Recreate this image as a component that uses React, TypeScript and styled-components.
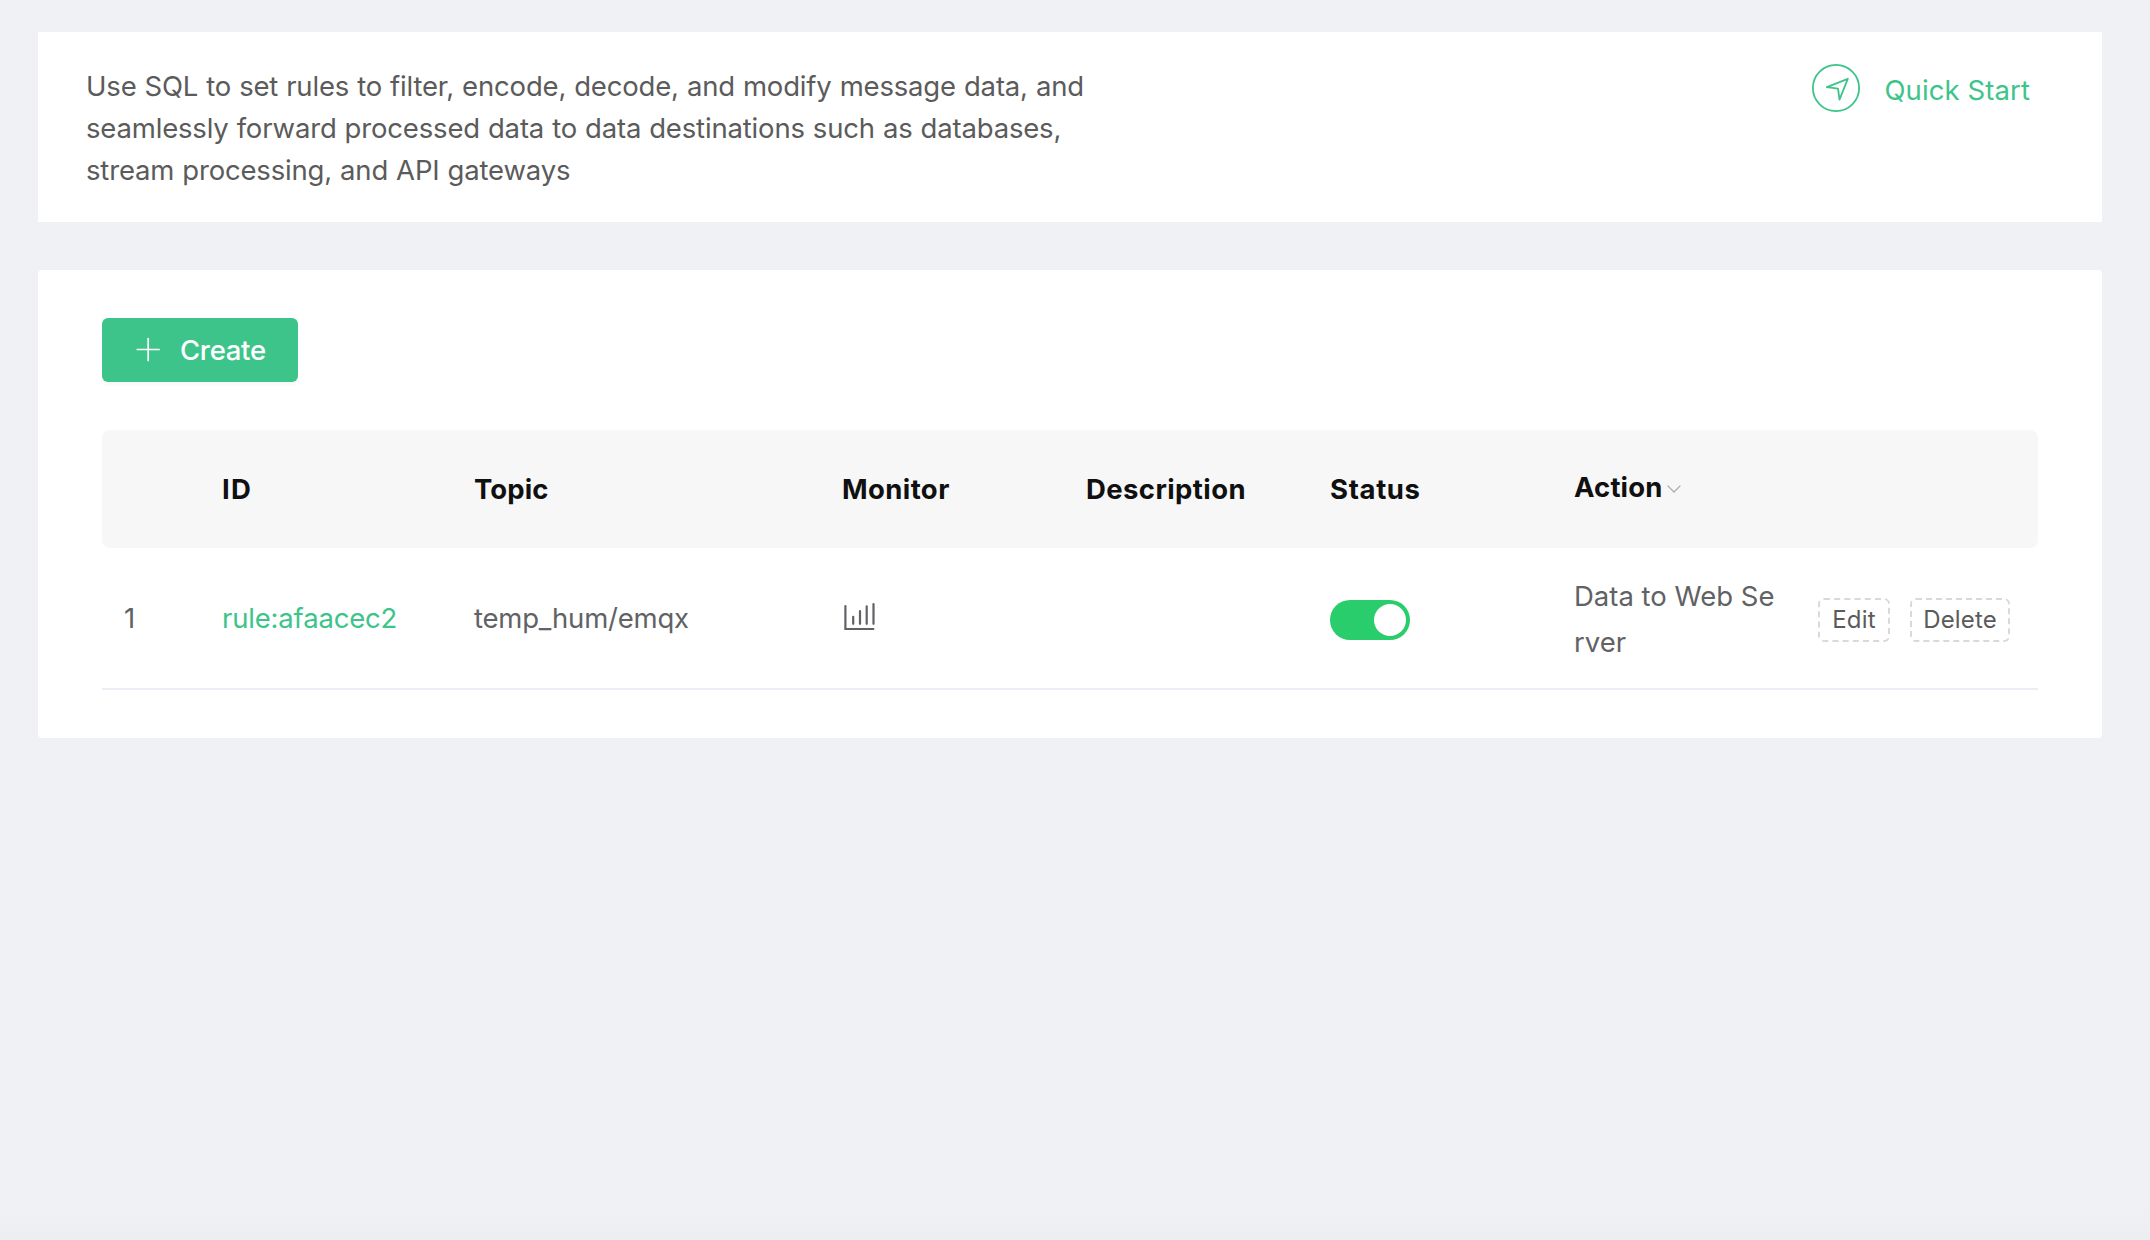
import React, { useState } from 'react';
import styled, { createGlobalStyle } from 'styled-components';

const color = {
  page: '#f0f1f5',
  card: '#ffffff',
  brand: '#3dc48a',
  switchOn: '#29cd6b',
  heading: '#101010',
  body: '#5b5b5b',
  cell: '#606266',
  headRow: '#f7f7f7',
  line: '#ebeef5',
  dashed: '#d9d9d9',
};

const GlobalStyle = createGlobalStyle`
  * { box-sizing: border-box; }
  html, body { margin: 0; padding: 0; }
  body {
    background: ${color.page};
    font-family: Inter, "Noto Sans", sans-serif;
    font-size: 27.5px;
    color: ${color.cell};
  }
  button { font-family: inherit; }
`;

const Page = styled.main`
  display: flex;
  flex-direction: column;
  gap: 48px;
  width: 2150px;
  height: 1240px;
  padding: 32px 48px 0 38px;
  background: linear-gradient(to bottom, ${color.page} 1205px, #edeef2 1240px);
  overflow: hidden;
`;

const IntroCard = styled.section`
  display: flex;
  justify-content: space-between;
  align-items: flex-start;
  height: 190px;
  padding: 32px 72px 0 48px;
  background: ${color.card};
`;

const IntroText = styled.p`
  width: 1012px;
  margin: 1px 0 0;
  line-height: 42px;
  letter-spacing: -0.17px;
  word-spacing: 0.45px;
  color: ${color.body};
`;

const QuickStart = styled.a`
  display: flex;
  align-items: flex-start;
  gap: 24px;
  color: ${color.brand};
  line-height: 42px;
  text-decoration: none;
  cursor: pointer;
`;

const QuickStartLabel = styled.span`
  padding-top: 5px;
  letter-spacing: 0.1px;
  white-space: nowrap;
`;

const PlaneBadge = styled.svg`
  display: block;
  width: 48px;
  height: 48px;
`;

const RulesCard = styled.section`
  display: flex;
  flex-direction: column;
  align-items: stretch;
  gap: 48px;
  padding: 48px 64px;
  border-radius: 4px;
  background: ${color.card};
`;

const CreateButton = styled.button`
  display: flex;
  align-items: center;
  align-self: flex-start;
  gap: 18px;
  width: 196px;
  height: 64px;
  padding: 0 0 0 34px;
  border: 0;
  border-radius: 6px;
  background: ${color.brand};
  box-shadow: 0 4px 0 rgba(0, 0, 0, 0.015);
  color: #ffffff;
  font-size: 27.5px;
  font-weight: 500;
  letter-spacing: -0.3px;
  line-height: 42px;
`;

const PlusIcon = styled.svg`
  width: 26px;
  height: 26px;
  margin-bottom: 1px;
`;

const Table = styled.div`
  display: flex;
  flex-direction: column;
`;

const Row = styled.div`
  display: grid;
  grid-template-columns: 100px 252px 368px 244px 244px 244px 244px 240px;
  align-items: center;
`;

const HeadRow = styled(Row)`
  height: 118px;
  border-radius: 8px;
  background: ${color.headRow};
  color: ${color.heading};
  font-weight: 700;
`;

const BodyRow = styled(Row)`
  height: 142px;
  border-bottom: 2px solid ${color.line};
`;

const Cell = styled.div<{ $track?: number }>`
  padding: 0 20px;
  line-height: 46px;
  letter-spacing: ${(p) => p.$track ?? 0}px;
  white-space: nowrap;
`;

const IndexCell = styled(Cell)`
  padding-left: 22px;
`;

const SortCell = styled(Cell)`
  display: flex;
  align-items: center;
  gap: 3px;
  padding-bottom: 4px;
`;

const Chevron = styled.svg`
  width: 16px;
  height: 10px;
  margin-top: 4px;
`;

const RuleLink = styled.a`
  color: ${color.brand};
  text-decoration: none;
  cursor: pointer;
`;

const ActionCell = styled(Cell)`
  padding-top: 2px;
  padding-right: 18px;
  white-space: normal;
  word-break: break-all;
`;

const ChartIcon = styled.svg`
  display: block;
  width: 34px;
  height: 30px;
  margin-bottom: 2px;
`;

const Toggle = styled.button<{ $on: boolean }>`
  display: flex;
  justify-content: ${(p) => (p.$on ? 'flex-end' : 'flex-start')};
  align-items: center;
  width: 80px;
  height: 40px;
  margin-top: 4px;
  padding: 4px;
  border: 0;
  border-radius: 20px;
  background: ${(p) => (p.$on ? color.switchOn : '#dcdfe6')};
`;

const Knob = styled.span`
  width: 32px;
  height: 32px;
  border-radius: 50%;
  background: #ffffff;
`;

const ButtonCell = styled(Cell)`
  display: flex;
  gap: 20px;
  padding-top: 4px;
`;

const DashedButton = styled.button<{ $width: number }>`
  display: flex;
  justify-content: center;
  align-items: center;
  width: ${(p) => p.$width}px;
  height: 44px;
  padding: 0;
  border: 2px dashed ${color.dashed};
  border-radius: 6px;
  background: #ffffff;
  color: ${color.body};
  font-size: 24px;
  letter-spacing: 0.15px;
  line-height: 40px;
`;

const headings: { label: string; track: number }[] = [
  { label: '', track: 0 },
  { label: 'ID', track: 1.2 },
  { label: 'Topic', track: 0.1 },
  { label: 'Monitor', track: 0.4 },
  { label: 'Description', track: 0.4 },
  { label: 'Status', track: 0.65 },
];

export default function App() {
  const [enabled, setEnabled] = useState(true);
  return (
    <>
      <GlobalStyle />
      <Page>
        <IntroCard>
          <IntroText>
            Use SQL to set rules to filter, encode, decode, and modify message data, and
            seamlessly forward processed data to data destinations such as databases,
            stream processing, and API gateways
          </IntroText>
          <QuickStart>
            <PlaneBadge viewBox="0 0 48 48" fill="none" stroke={color.brand}>
              <circle cx="24" cy="24" r="23.1" strokeWidth="1.8" />
              <path d="M14.8 23.2 35.8 14.8 27.5 35.6 26 24.6Z" strokeWidth="1.8" strokeLinejoin="round" />
            </PlaneBadge>
            <QuickStartLabel>Quick Start</QuickStartLabel>
          </QuickStart>
        </IntroCard>

        <RulesCard>
          <CreateButton>
            <PlusIcon viewBox="0 0 26 26" stroke="#ffffff" strokeWidth="1.7" strokeLinecap="round">
              <path d="M12.2 1.6V23.4M1.3 12.5H23.1" />
            </PlusIcon>
            Create
          </CreateButton>

          <Table>
            <HeadRow>
              {headings.map((h) => (
                <Cell key={h.label} $track={h.track}>{h.label}</Cell>
              ))}
              <SortCell $track={0.15}>
                Action
                <Chevron viewBox="0 0 16 10" fill="none" stroke="#a8abb2" strokeWidth="1.3">
                  <path d="M1.6 1.6 8 8 14.4 1.6" />
                </Chevron>
              </SortCell>
              <Cell />
            </HeadRow>

            <BodyRow>
              <IndexCell>1</IndexCell>
              <Cell $track={-0.18}><RuleLink>rule:afaacec2</RuleLink></Cell>
              <Cell $track={-0.22}>temp_hum/emqx</Cell>
              <Cell>
                <ChartIcon viewBox="0 0 34 30" fill="none" stroke={color.cell} strokeWidth="2.2" strokeLinecap="round">
                  <path d="M3.4 4.1V27H31.4M11.2 14.8V21.8M18 9.1V21.8M24.7 4.4V21.8M31.5 2.1V21.8" />
                </ChartIcon>
              </Cell>
              <Cell />
              <Cell>
                <Toggle $on={enabled} onClick={() => setEnabled(!enabled)}><Knob /></Toggle>
              </Cell>
              <ActionCell>Data to Web Server</ActionCell>
              <ButtonCell>
                <DashedButton $width={72}>Edit</DashedButton>
                <DashedButton $width={100}>Delete</DashedButton>
              </ButtonCell>
            </BodyRow>
          </Table>
        </RulesCard>
      </Page>
    </>
  );
}
